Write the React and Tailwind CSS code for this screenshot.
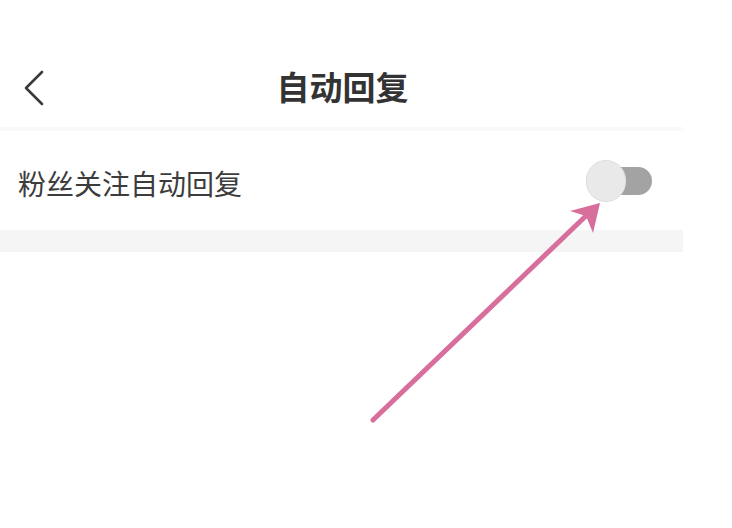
export default function App() {
  const font = { fontFamily: '"Noto Sans CJK SC", "Noto Sans", sans-serif' };
  return (
    <div className="relative w-[732px] h-[528px] bg-white overflow-hidden" style={font}>
      <div className="w-[683px] pt-[49px]">
        <div className="relative h-[78px] flex items-center justify-center">
          <svg className="absolute left-[22px] top-[20px]" width="24" height="38" viewBox="0 0 24 38">
            <path d="M20 3 L4 19 L20 35" fill="none" stroke="#3a3a3a" strokeWidth="2.6" strokeLinecap="round" strokeLinejoin="round" />
          </svg>
          <div className="text-[33px] font-bold text-[#333333] leading-none pb-[4px] pl-[2px]">自动回复</div>
        </div>
        <div className="h-[4px] bg-[#f9f9f9]" />
        <div className="h-[99px] flex items-center justify-between pl-[18px] pr-[31px]">
          <div className="text-[28px] text-[#3c3c3c] leading-none pt-[4px]">粉丝关注自动回复</div>
          <div className="relative w-[52px] h-[28px] rounded-full bg-[#a3a3a3]">
            <div className="absolute left-[-14px] top-[-7px] w-[40px] h-[42px] rounded-full bg-[#e9e9e9] border border-[#dddddd]" />
          </div>
        </div>
        <div className="h-[22px] bg-[#f5f5f5]" />
      </div>
      <svg className="absolute left-0 top-0 pointer-events-none" width="732" height="528" viewBox="0 0 732 528">
        <line x1="373" y1="420" x2="590" y2="212" stroke="#d86e9b" strokeWidth="5" strokeLinecap="round" />
        <path d="M600 203 L570 211 L586 216 L593 233 Z" fill="#d86e9b" />
      </svg>
    </div>
  );
}
